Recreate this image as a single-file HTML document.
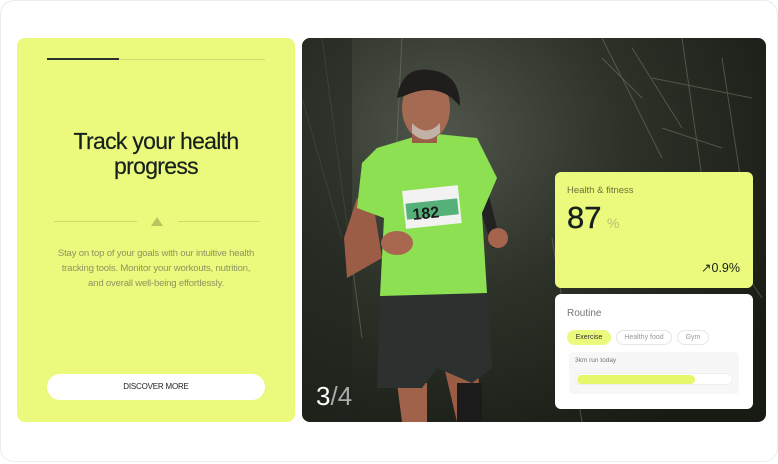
<!DOCTYPE html>
<html><head><meta charset="utf-8"><style>
*{margin:0;padding:0;box-sizing:border-box}
body{width:778px;height:464px;background:#fff;font-family:"Liberation Sans",sans-serif;position:relative;overflow:hidden}
.frame{position:absolute;left:0;top:0;width:778px;height:462px;border:1px solid #ececec;border-radius:14px;background:#fff}
.left{position:absolute;left:17px;top:38px;width:278px;height:384px;background:#ebfa7c;border-radius:8px}
.bar{position:absolute;top:20px;height:2px}
h1{position:absolute;top:91px;left:0;width:278px;text-align:center;font-size:23px;font-weight:normal;color:#16201c;line-height:25px;letter-spacing:-0.7px;-webkit-text-stroke:0.2px #16201c}
.sep{position:absolute;top:183px;height:1px;background:#cddb6d}
.tri{position:absolute;left:134px;top:179px;width:0;height:0;border-left:6px solid transparent;border-right:6px solid transparent;border-bottom:9px solid #b8c55e}
.desc{position:absolute;top:208px;left:38px;width:202px;text-align:center;font-size:9.6px;line-height:15px;color:#8c9460;letter-spacing:-0.2px}
.btn{position:absolute;left:30px;top:336px;width:218px;height:26px;border-radius:13px;background:#fff;text-align:center;font-size:8px;line-height:26px;color:#222;letter-spacing:-0.2px}
.photo{position:absolute;left:302px;top:38px;width:464px;height:384px;border-radius:8px;overflow:hidden;
background:radial-gradient(ellipse at 30% 25%,#4f554a 0%,#2d3229 40%,#171b14 85%),#1a1d17}
.num{position:absolute;left:14px;top:343px;font-size:26px;color:#fff}
.num span{color:#aaa}
.hc{position:absolute;left:555px;top:172px;width:198px;height:116px;background:#ebfa7c;border-radius:6px}
.rc{position:absolute;left:555px;top:294px;width:198px;height:115px;background:#fff;border-radius:6px}
.pill{position:absolute;top:36px;height:15px;border-radius:8px;font-size:7px;line-height:14px;text-align:center;color:#999;border:1px solid #e6e6e6}
</style></head><body>
<div class="frame"></div>
<div class="left">
  <div class="bar" style="left:30px;width:72px;background:#2a342c"></div>
  <div class="bar" style="left:102px;width:146px;height:1px;top:20.5px;background:#cfdc6f"></div>
  <h1>Track your health<br>progress</h1>
  <div class="sep" style="left:37px;width:83px"></div>
  <div class="sep" style="left:161px;width:82px"></div>
  <div class="tri"></div>
  <div class="desc">Stay on top of your goals with our intuitive health tracking tools. Monitor your workouts, nutrition, and overall well-being effortlessly.</div>
  <div class="btn">DISCOVER MORE</div>
</div>
<div class="photo">
  <svg width="464" height="384" style="position:absolute;left:0;top:0">
    <g stroke="#7a8270" stroke-width="1" fill="none" opacity=".5">
      <path d="M300 0 L360 120 M330 10 L380 90 M380 0 L400 140 M420 20 L440 150 M350 40 L450 60 M0 60 L40 200 M20 0 L60 300 M100 0 L90 200 M300 20 L340 60 M360 90 L420 110 M250 200 L280 384 M420 200 L460 260"/>
    </g>
    <rect x="0" y="0" width="50" height="384" fill="#20241d" opacity=".5"/>
    <path d="M95 345 L100 384 L125 384 L125 345 Z" fill="#a0624a"/>
    <path d="M140 320 L155 384 L180 384 L175 320 Z" fill="#9a5c44"/>
    <rect x="155" y="345" width="25" height="39" fill="#1b1b1b"/>
    <path d="M78 250 L185 245 L190 330 L170 345 L135 330 L120 350 L75 350 Z" fill="#2c3130"/>
    <path d="M55 160 L42 200 L45 240 L80 220 L72 170 Z" fill="#9b5d45"/>
    <path d="M185 150 L200 210 L190 210 L178 170 Z" fill="#222"/>
    <ellipse cx="196" cy="200" rx="10" ry="10" fill="#a5644b"/>
    <path d="M75 110 L125 95 L175 100 L195 140 L180 175 L185 255 L78 258 L82 180 L55 170 L60 125 Z" fill="#8ce052"/>
    <rect x="102" y="150" width="56" height="38" fill="#f2f2f2" transform="rotate(-6 130 170)"/>
    <rect x="104" y="163" width="52" height="16" fill="#56b07a" transform="rotate(-6 130 170)"/>
    <text x="110" y="180" font-size="16" font-weight="bold" fill="#1b1b1b" font-family="Liberation Sans" transform="rotate(-6 130 170)">182</text>
    <ellipse cx="95" cy="205" rx="16" ry="12" fill="#a8674e"/>
    <rect x="110" y="90" width="25" height="15" fill="#9a5e48"/>
    <ellipse cx="124" cy="70" rx="24" ry="32" fill="#a56a52"/>
    <path d="M95 60 Q100 28 128 32 Q158 35 158 68 L150 60 Q130 45 102 58 Z" fill="#1f1e1c"/>
    <path d="M110 85 Q124 100 138 85 L138 95 Q124 108 110 95 Z" fill="#c9c3bb" opacity=".8"/>
  </svg>
  <div class="num">3<span>/4</span></div>
</div>
<div class="hc">
  <div style="position:absolute;left:12px;top:13px;font-size:9.5px;color:#6a733a">Health &amp; fitness</div>
  <div style="position:absolute;left:12px;top:28px;font-size:31px;color:#16201c;-webkit-text-stroke:0.4px #16201c">87</div>
  <div style="position:absolute;left:52px;top:43px;font-size:14px;color:#b5c170">%</div>
  <div style="position:absolute;right:13px;top:88px;font-size:12.5px;color:#16201c">↗0.9%</div>
</div>
<div class="rc">
  <div style="position:absolute;left:12px;top:14px;font-size:10px;color:#777">Routine</div>
  <div class="pill" style="left:12px;width:44px;background:#ebfa7c;border-color:#ebfa7c;color:#333">Exercise</div>
  <div class="pill" style="left:61px;width:56px">Healthy food</div>
  <div class="pill" style="left:122px;width:32px">Gym</div>
  <div style="position:absolute;left:14px;top:58px;width:170px;height:42px;background:#f7f7f7;border-radius:4px">
    <div style="position:absolute;left:6px;top:5px;font-size:6.5px;color:#777">3km run today</div>
    <div style="position:absolute;left:6px;top:21px;width:158px;height:12px;border-radius:6px;background:#fff;border:1px solid #eee"></div>
    <div style="position:absolute;left:8px;top:23px;width:118px;height:9px;border-radius:5px;background:#e6f76b"></div>
  </div>
</div>
</body></html>
